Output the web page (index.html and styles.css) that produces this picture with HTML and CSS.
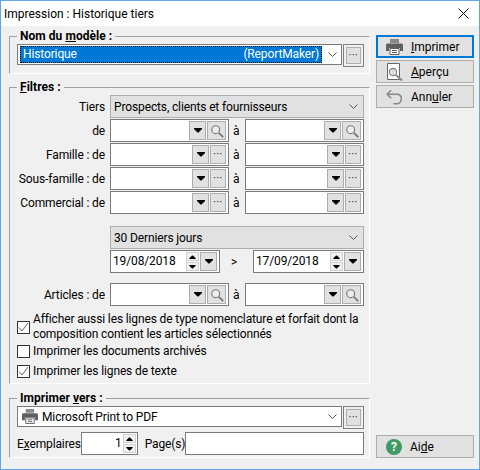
FILE: index.html
```html
<!DOCTYPE html>
<html lang="fr">

<head>
    <meta charset="UTF-8">
    <title>Impression : Historique tiers</title>
    <link rel="stylesheet" href="styles.css">
</head>

<body>
    <svg class="defs" width="0" height="0">
        <symbol id="arrow" viewBox="0 0 8 5">
            <path d="M0 0h8v1L4.500 4.500h-1L0 1z" fill="#000" />
        </symbol>
        <symbol id="chevron" viewBox="0 0 9 5">
            <path d="M.5 .5L4.500 4.500L8.500 .5" fill="none" stroke="#555" />
        </symbol>
        <symbol id="loupe" viewBox="0 0 16 16">
            <circle cx="6.500" cy="6.500" r="4.500" fill="#eee" stroke="#777" stroke-width="1.300" />
            <path d="M10 10l5 5" stroke="#707070" stroke-width="2" />
        </symbol>
        <symbol id="printer" viewBox="0 0 17 16">
            <path d="M4 0h9v4H4z" fill="#8a8a8a" />
            <path d="M1.500 4.500h14q1.500 0 1.500 1.500v6h-3V9H3v3H0V6q0-1.500 1.500-1.500z" fill="#5f5f5f" />
            <path d="M4 9.500h9v6H4z" fill="#fff" stroke="#5f5f5f" />
            <path d="M6 11.500h5M6 13.500h5" stroke="#5f5f5f" />
        </symbol>
        <symbol id="preview" viewBox="0 0 17 18">
            <path d="M1.500 .5h12v16h-12z" fill="#fff" stroke="#666" />
            <circle cx="7" cy="9" r="3.500" fill="#fff" stroke="#7d7d7d" stroke-width="1.300" />
            <path d="M5.500 8h3M5.500 10h3" stroke="#aaa" />
            <path d="M10 12l6 5.500" stroke="#888" stroke-width="2" />
        </symbol>
        <symbol id="undo" viewBox="0 0 15 14">
            <path d="M1.500 4.500h8q4 0 4 4t-4 4.500h-3M4.500 1L1 4.500L4.500 8" fill="none" stroke="#888" stroke-width="1.300" />
        </symbol>
    </svg>

    <div class="window">
        <div class="titlebar">
            <span>Impression : Historique tiers</span>
            <svg class="close" width="11" height="11" viewBox="0 0 11 11">
                <path d="M.5 .5l10 10M10.500 .5l-10 10" stroke="#111" />
            </svg>
        </div>

        <div class="content">
            <div class="main">
                <fieldset class="group group-model">
                    <legend><b>Nom du <u>m</u>odèle :</b></legend>
                    <div class="combo-row">
                        <div class="combo">
                            <div class="selected"><span>Historique</span><span>(ReportMaker)</span></div>
                            <svg class="chevron"><use href="#chevron" /></svg>
                        </div>
                        <div class="dots-frame"><div class="btn-small">···</div></div>
                    </div>
                </fieldset>

                <fieldset class="group group-filters">
                    <legend><b><u>F</u>iltres :</b></legend>

                    <div class="row row-wide">
                        <label>Tiers</label>
                        <div class="flat-combo"><span>Prospects, clients et fournisseurs</span><svg class="chevron"><use href="#chevron" /></svg></div>
                    </div>
                    <div class="row">
                        <label>de</label>
                        <div class="field">
                            <div class="btn-small btn-drop"><svg><use href="#arrow" /></svg></div>
                            <div class="btn-small btn-find"><svg><use href="#loupe" /></svg></div>
                        </div>
                        <span class="to">à</span>
                        <div class="field">
                            <div class="btn-small btn-drop"><svg><use href="#arrow" /></svg></div>
                            <div class="btn-small btn-find"><svg><use href="#loupe" /></svg></div>
                        </div>
                    </div>
                    <div class="row">
                        <label>Famille : de</label>
                        <div class="field">
                            <div class="btn-small btn-drop"><svg><use href="#arrow" /></svg></div>
                            <div class="btn-small btn-more">···</div>
                        </div>
                        <span class="to">à</span>
                        <div class="field">
                            <div class="btn-small btn-drop"><svg><use href="#arrow" /></svg></div>
                            <div class="btn-small btn-more">···</div>
                        </div>
                    </div>
                    <div class="row">
                        <label>Sous-famille : de</label>
                        <div class="field">
                            <div class="btn-small btn-drop"><svg><use href="#arrow" /></svg></div>
                            <div class="btn-small btn-more">···</div>
                        </div>
                        <span class="to">à</span>
                        <div class="field">
                            <div class="btn-small btn-drop"><svg><use href="#arrow" /></svg></div>
                            <div class="btn-small btn-more">···</div>
                        </div>
                    </div>
                    <div class="row">
                        <label>Commercial : de</label>
                        <div class="field">
                            <div class="btn-small btn-drop"><svg><use href="#arrow" /></svg></div>
                            <div class="btn-small btn-more">···</div>
                        </div>
                        <span class="to">à</span>
                        <div class="field">
                            <div class="btn-small btn-drop"><svg><use href="#arrow" /></svg></div>
                            <div class="btn-small btn-more">···</div>
                        </div>
                    </div>

                    <div class="row row-wide row-period">
                        <label></label>
                        <div class="flat-combo"><span>30 Derniers jours</span><svg class="chevron"><use href="#chevron" /></svg></div>
                    </div>
                    <div class="row row-dates">
                        <label></label>
                        <div class="field">
                            <span class="value">19/08/2018</span>
                            <div class="spin">
                                <div class="spin-cell"><svg class="up"><use href="#arrow" /></svg></div>
                                <div class="spin-cell"><svg><use href="#arrow" /></svg></div>
                            </div>
                            <div class="btn-small btn-drop"><svg><use href="#arrow" /></svg></div>
                        </div>
                        <span class="to">&gt;</span>
                        <div class="field">
                            <span class="value">17/09/2018</span>
                            <div class="spin">
                                <div class="spin-cell"><svg class="up"><use href="#arrow" /></svg></div>
                                <div class="spin-cell"><svg><use href="#arrow" /></svg></div>
                            </div>
                            <div class="btn-small btn-drop"><svg><use href="#arrow" /></svg></div>
                        </div>
                    </div>
                    <div class="row row-articles">
                        <label>Articles : de</label>
                        <div class="field">
                            <div class="btn-small btn-drop"><svg><use href="#arrow" /></svg></div>
                            <div class="btn-small btn-find"><svg><use href="#loupe" /></svg></div>
                        </div>
                        <span class="to">à</span>
                        <div class="field">
                            <div class="btn-small btn-drop"><svg><use href="#arrow" /></svg></div>
                            <div class="btn-small btn-find"><svg><use href="#loupe" /></svg></div>
                        </div>
                    </div>

                    <div class="check check-first">
                        <span class="box"><svg viewBox="0 0 11 11"><path d="M1 5.500l3 3.500l6-8" fill="none" stroke="#666" /></svg></span>
                        <span>Afficher aussi les lignes de type nomenclature et forfait dont la composition contient les articles sélectionnés</span>
                    </div>
                    <div class="check check-second">
                        <span class="box"></span>
                        <span>Imprimer les documents archivés</span>
                    </div>
                    <div class="check">
                        <span class="box"><svg viewBox="0 0 11 11"><path d="M1 5.500l3 3.500l6-8" fill="none" stroke="#666" /></svg></span>
                        <span>Imprimer les lignes de texte</span>
                    </div>
                </fieldset>

                <fieldset class="group group-output">
                    <legend><b>Imprimer <u>v</u>ers :</b></legend>
                    <div class="combo-row">
                        <div class="combo printer-combo">
                            <svg class="printer-small"><use href="#printer" /></svg>
                            <span>Microsoft Print to PDF</span>
                            <svg class="chevron"><use href="#chevron" /></svg>
                        </div>
                        <div class="dots-frame"><div class="btn-small">···</div></div>
                    </div>
                    <div class="copies-row">
                        <span class="copies-label">E<u>x</u>emplaires</span>
                        <div class="copies">
                            <span class="value">1</span>
                            <div class="spin">
                                <div class="spin-cell"><svg class="up"><use href="#arrow" /></svg></div>
                                <div class="spin-cell"><svg><use href="#arrow" /></svg></div>
                            </div>
                        </div>
                        <span class="pages-label">Page(s)</span>
                        <div class="pages"></div>
                    </div>
                </fieldset>
            </div>

            <div class="side">
                <div class="actions">
                    <div class="action default"><svg class="action-icon"><use href="#printer" /></svg><span><u>I</u>mprimer</span></div>
                    <div class="action"><svg class="action-icon icon-tall"><use href="#preview" /></svg><span><u>A</u>perçu</span></div>
                    <div class="action"><svg class="action-icon"><use href="#undo" /></svg><span>Ann<u>u</u>ler</span></div>
                </div>
                <div class="action">
                    <span class="help">?</span><span>Ai<u>d</u>e</span>
                </div>
            </div>
        </div>
    </div>
</body>

</html>
```

FILE: styles.css
```css
* {
    box-sizing: border-box;
}

body {
    margin: 0;
    font-family: 'Roboto', sans-serif;
    font-size: 12px;
    letter-spacing: -.13px;
    color: #000;
    background-color: #f0f0f0;
}

u {
    text-underline-offset: 1px;
}

.defs {
    display: block;
    height: 0;
}

.window {
    display: flex;
    flex-direction: column;
    width: 480px;
    height: 470px;
    border: 1px solid #63a6e8;
    background-color: #f0f0f0;
}

.titlebar {
    display: flex;
    align-items: center;
    justify-content: space-between;
    height: 25px;
    padding: 0 10px 0 3px;
    background-color: #fff;
    letter-spacing: 0;
}

.content {
    display: flex;
    flex: 1;
    padding: 0 5px 11px 8px;
}

.main {
    display: flex;
    flex-direction: column;
    width: 361px;
}

/* group boxes */
.group {
    margin: 0;
    padding: 0 5px 0 7px;
    border: 1px solid;
    border-color: #a0a0a0 #fff #fff #a0a0a0;
    min-width: 0;
}

.group legend {
    padding: 0 3px;
    line-height: 15px;
    letter-spacing: .05px;
}

.group-model {
    height: 45px;
    margin-top: 3px;
}

.group-filters {
    height: 304px;
    margin-top: 6px;
}

.group-output {
    height: 67px;
    margin-top: 7px;
}

/* combos */
.combo-row {
    display: flex;
    gap: 1px;
}

.combo {
    display: flex;
    align-items: center;
    width: 325px;
    height: 21px;
    padding: 0 4px 0 2px;
    border: 1px solid #7a7a7a;
    background-color: #fff;
}

.selected {
    display: flex;
    justify-content: space-between;
    flex: 1;
    height: 17px;
    padding: 0 3px;
    margin-right: 6px;
    line-height: 16px;
    color: #fff;
    background-color: #0078d7;
    outline: 1px dotted #000;
    outline-offset: -1px;
}

.chevron {
    flex: none;
    width: 9px;
    height: 5px;
}

.dots-frame {
    display: flex;
    width: 21px;
    height: 23px;
    padding: 2px;
    border: 1px solid #808080;
}

.btn-small {
    display: flex;
    align-items: center;
    justify-content: center;
    flex: none;
    width: 100%;
    border: 1px solid #adadad;
    background-color: #e1e1e1;
    font-size: 10px;
    letter-spacing: .5px;
    line-height: 1;
}

/* filter rows */
.row {
    display: grid;
    grid-template-columns: 93px 119px 16px 119px;
    align-items: center;
    margin-bottom: 1px;
}

.row label {
    padding-right: 5px;
    text-align: right;
    white-space: nowrap;
}

.row-wide {
    grid-template-columns: 93px 254px;
}

.to {
    padding-left: 4px;
}

.flat-combo {
    display: flex;
    align-items: center;
    justify-content: space-between;
    height: 23px;
    padding: 0 5px 0 3px;
    border: 1px solid #adadad;
    background-color: #e1e1e1;
}

.field {
    display: flex;
    gap: 1px;
    height: 23px;
    padding: 1px 2px;
    justify-content: flex-end;
    border: 1px solid #7a7a7a;
    background-color: #fff;
}

.btn-drop {
    width: 17px;
}

.btn-find {
    width: 19px;
}

.btn-more {
    width: 16px;
}

.btn-drop svg {
    width: 8px;
    height: 5px;
}

.btn-find svg {
    width: 14px;
    height: 14px;
}

.row-period {
    margin-top: 12px;
}

.row-dates {
    grid-template-columns: 93px 110px 33px 111px;
    margin-bottom: 0;
}

.row-dates .to {
    padding-left: 11px;
}

.value {
    flex: 1;
    line-height: 19px;
}

.spin {
    display: flex;
    flex-direction: column;
    gap: 1px;
    flex: none;
    width: 13px;
}

.spin-cell {
    display: flex;
    align-items: center;
    justify-content: center;
    flex: 1;
    border: 1px solid #d0d0d0;
    background-color: #f0f0f0;
}

.spin-cell svg {
    width: 7px;
    height: 4px;
}

.spin-cell .up {
    transform: rotate(180deg);
}

.row-articles {
    margin-top: 10px;
}

/* check boxes */
.check {
    display: flex;
    align-items: center;
    gap: 3px;
    margin-top: 5px;
    line-height: 15px;
}

.check-first {
    margin-top: 6px;
}

.check-second {
    margin-top: 2px;
}

.box {
    flex: none;
    width: 13px;
    height: 13px;
    border: 1px solid #333;
    background-color: #fff;
}

.box svg {
    display: block;
    width: 11px;
    height: 11px;
}

/* output group */
.printer-combo {
    gap: 4px;
    padding: 0 4px;
}

.printer-combo span {
    flex: 1;
}

.printer-small {
    flex: none;
    width: 16px;
    height: 15px;
}

.copies-row {
    display: flex;
    align-items: center;
    height: 23px;
    margin-top: 3px;
}

.copies-label {
    width: 64px;
}

.copies {
    display: flex;
    width: 57px;
    height: 23px;
    padding: 1px;
    border: 1px solid #7a7a7a;
    background-color: #fff;
    text-align: right;
}

.copies .value {
    padding-right: 1px;
}

.pages-label {
    flex: 1;
    padding-left: 7px;
}

.pages {
    width: 179px;
    height: 23px;
    border: 1px solid #7a7a7a;
    background-color: #fff;
}

/* right column */
.side {
    display: flex;
    flex-direction: column;
    justify-content: space-between;
    width: 98px;
    margin-left: 6px;
    padding-top: 9px;
}

.actions {
    display: flex;
    flex-direction: column;
    gap: 2px;
}

.action {
    display: flex;
    align-items: center;
    gap: 8px;
    height: 23px;
    padding-left: 9px;
    border: 1px solid #adadad;
    background-color: #e1e1e1;
    letter-spacing: 0;
}

.action.default {
    padding-left: 8px;
    border: 2px solid #0078d7;
}

.action-icon {
    flex: none;
    width: 17px;
    height: 16px;
}

.icon-tall {
    height: 18px;
}

.help {
    flex: none;
    width: 16px;
    height: 16px;
    border-radius: 50%;
    background-color: #3f9a63;
    color: #fff;
    font-weight: bold;
    line-height: 16px;
    text-align: center;
}
```
